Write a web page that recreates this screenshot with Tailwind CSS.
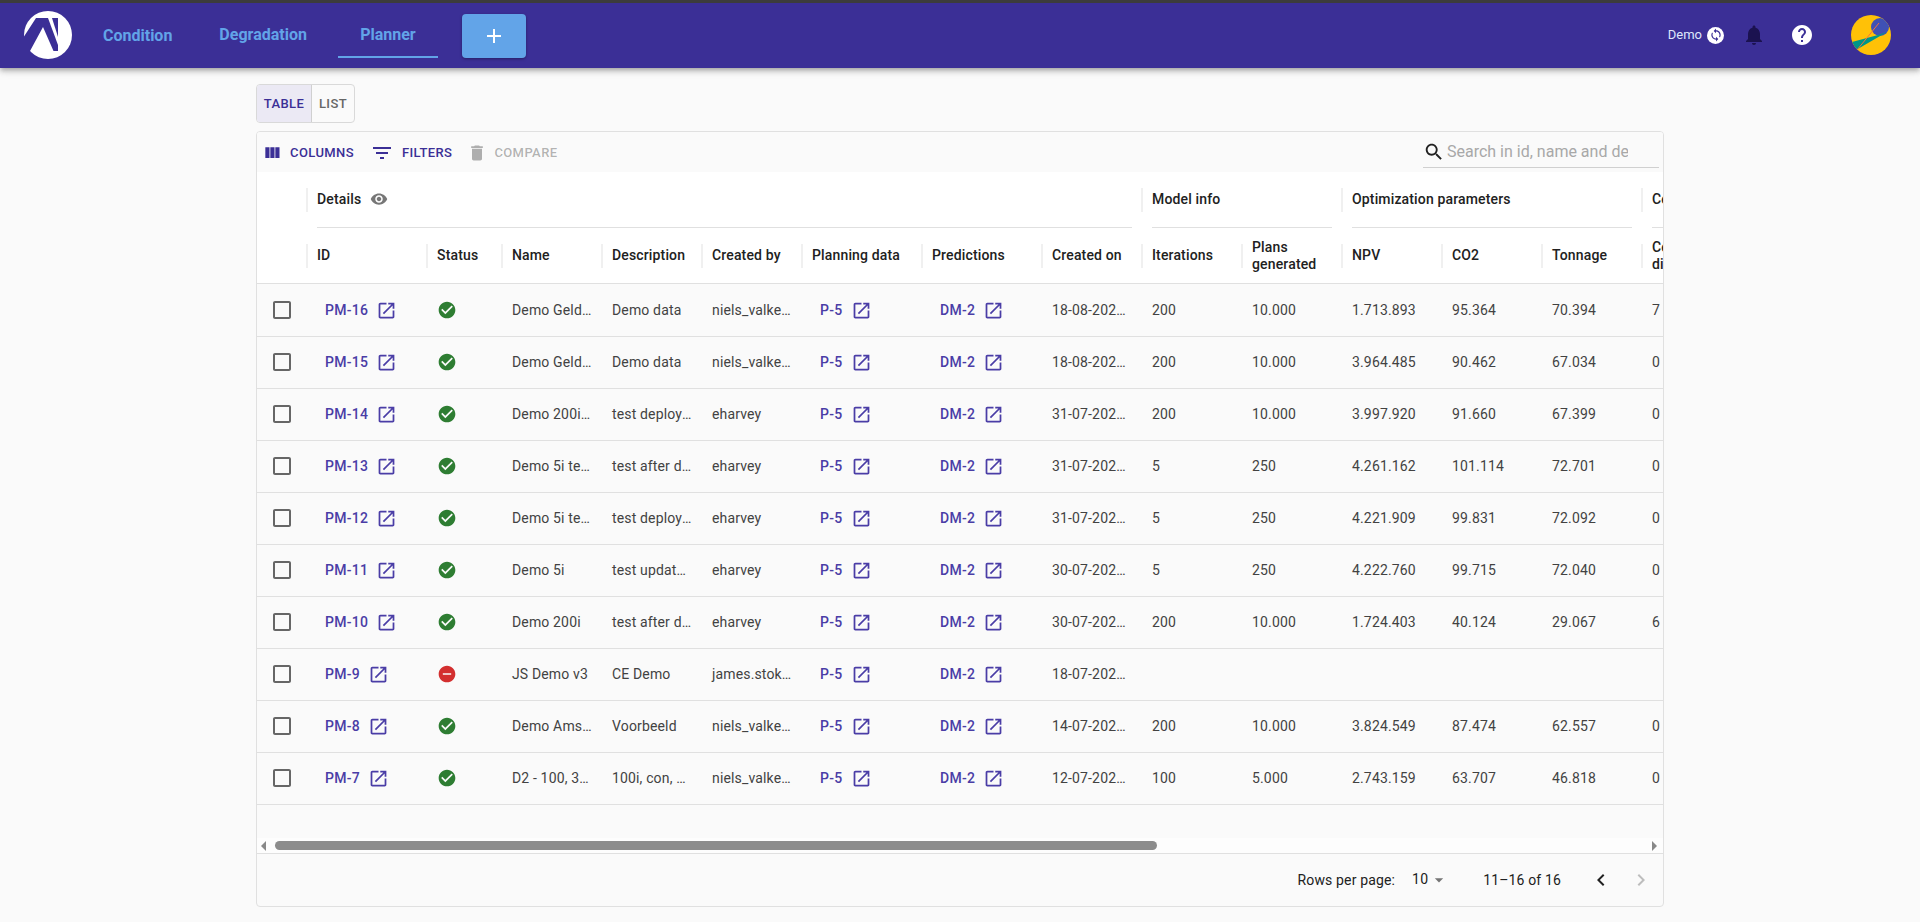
<!DOCTYPE html>
<html lang="en"><head><meta charset="utf-8"><title>Planner</title>
<script src="https://cdn.jsdelivr.net/npm/@tailwindcss/browser@4"></script></head>
<body class="font-['Roboto',sans-serif] bg-[#fafafa] text-[#212121] h-[922px] overflow-hidden">
<svg class="hidden"><defs>
<symbol id="open" viewBox="0 0 24 24"><path fill="currentColor" d="M19 19H5V5h7V3H5c-1.11 0-2 .9-2 2v14c0 1.1.89 2 2 2h14c1.1 0 2-.9 2-2v-7h-2v7zM14 3v2h3.59l-9.83 9.83 1.41 1.41L19 6.41V10h2V3h-7z"/></symbol>
<symbol id="ok" viewBox="0 0 24 24"><path fill="#2e7d32" d="M12 2C6.48 2 2 6.48 2 12s4.48 10 10 10 10-4.48 10-10S17.52 2 12 2zm-2 15-5-5 1.41-1.41L10 14.17l7.59-7.59L19 8l-9 9z"/></symbol>
<symbol id="err" viewBox="0 0 24 24"><path fill="#d32f2f" d="M12 2C6.48 2 2 6.48 2 12s4.48 10 10 10 10-4.48 10-10S17.52 2 12 2zm5 11H7v-2h10v2z"/></symbol>
<symbol id="box" viewBox="0 0 24 24"><path fill="#666" d="M19 5v14H5V5h14m0-2H5c-1.1 0-2 .9-2 2v14c0 1.1.9 2 2 2h14c1.1 0 2-.9 2-2V5c0-1.1-.9-2-2-2z"/></symbol>
</defs></svg>

<header class="border-t-[3px] border-[#3c3c3c] h-[68px] bg-[#3b2f96] flex items-center relative z-10 shadow-[0_2px_4px_-1px_rgba(0,0,0,.2),0_4px_5px_0_rgba(0,0,0,.14),0_1px_10px_0_rgba(0,0,0,.12)]">
  <svg class="ml-6 w-12 h-12 shrink-0 -mt-[2px]" viewBox="0 0 48 48"><circle cx="24" cy="24" r="24" fill="#fff"/><path fill="#3b2f96" d="M-1 27 12 7H34V40H29.5L19 16 6 40H-1Z"/><path fill="#fff" d="M24 7H28L34 26V34Z"/></svg>
  <nav class="ml-2 flex h-full text-[#62a4e8] text-[16px] font-bold">
    <a class="px-[23px] flex items-center pt-[1px] -mt-[1px]">Condition</a>
    <a class="px-[23px] flex items-center -mt-[1px] ml-px">Degradation</a>
    <a class="ml-[8px] w-[100px] justify-center flex items-center -mt-[1px] relative after:content-[''] after:absolute after:left-0 after:right-0 after:bottom-[10px] after:h-[2px] after:bg-[#62a4e8]">Planner</a>
  </nav>
  <button class="ml-6 w-16 h-11 mt-px rounded bg-[#62a4e8] flex items-center justify-center text-white shadow-[0_1px_3px_rgba(0,0,0,.35)]"><svg class="w-6 h-6" viewBox="0 0 24 24"><path fill="currentColor" d="M19 13h-6v6h-2v-6H5v-2h6V5h2v6h6v2z"/></svg></button>
  <div class="ml-auto flex items-center mr-[29px] -mt-[1px]">
    <span class="text-[13px] text-[#dfe6fb]">Demo</span>
    <span class="ml-[5px] w-[17px] h-[17px] rounded-full bg-white flex items-center justify-center"><svg class="w-[14px] h-[14px]" viewBox="0 0 24 24"><path fill="#3b2f96" d="M12 4V1L8 5l4 4V6c3.31 0 6 2.69 6 6 0 1.01-.25 1.97-.7 2.8l1.46 1.46C19.54 15.03 20 13.57 20 12c0-4.42-3.58-8-8-8zm0 14c-3.31 0-6-2.69-6-6 0-1.01.25-1.97.7-2.8L5.24 7.74C4.46 8.97 4 10.43 4 12c0 4.42 3.58 8 8 8v3l4-4-4-4v3z"/></svg></span>
    <svg class="ml-[18px] w-6 h-6" viewBox="0 0 24 24"><path fill="#1b1250" d="M12 22c1.1 0 2-.9 2-2h-4c0 1.1.89 2 2 2zm6-6v-5c0-3.07-1.64-5.64-4.5-6.32V4c0-.83-.67-1.5-1.5-1.5s-1.5.67-1.5 1.5v.68C7.63 5.36 6 7.92 6 11v5l-2 2v1h16v-1l-2-2z"/></svg>
    <svg class="ml-6 w-6 h-6" viewBox="0 0 24 24"><path fill="#fff" d="M12 2C6.48 2 2 6.48 2 12s4.48 10 10 10 10-4.48 10-10S17.52 2 12 2zm1 17h-2v-2h2v2zm2.07-7.75-.9.92C13.45 12.9 13 13.5 13 15h-2v-.5c0-1.1.45-2.1 1.17-2.83l1.24-1.26c.37-.36.59-.86.59-1.41 0-1.1-.9-2-2-2s-2 .9-2 2H8c0-2.21 1.79-4 4-4s4 1.79 4 4c0 .88-.36 1.68-.93 2.25z"/></svg>
    <svg class="ml-[37px] w-10 h-10" viewBox="0 0 40 40"><defs><clipPath id="av"><circle cx="20" cy="20" r="20"/></clipPath></defs><g clip-path="url(#av)"><rect width="40" height="40" fill="#ffc107"/><circle cx="29" cy="12" r="9" fill="#3f51b5"/><path fill="#009688" d="M1 27 5 35 36 17 27 20Z"/><path d="M6 35 28 8" stroke="#f4703e" stroke-width="1"/></g></svg>
  </div>
</header>

<main class="ml-[256px] w-[1408px]">
  <div class="mt-4 flex h-[39px] w-[99px] rounded border border-[#d9d9d9] text-[13px] tracking-[0.4px] font-medium overflow-hidden">
    <button class="w-[55px] bg-[#ebe9f4] text-[#3b2f96] border-r border-[#d0d0d0]">TABLE</button>
    <button class="flex-1 text-[#666]">LIST</button>
  </div>

  <section class="mt-2 h-[776px] border border-[#e0e0e0] rounded overflow-hidden">
    <div class="h-10 pt-[2px] bg-[#fafafa] flex items-center text-[13px] tracking-[0.4px] font-medium text-[#3b2f96]">
      <svg class="ml-[5px] w-5 h-5" viewBox="0 0 24 24"><path fill="currentColor" d="M10 18h5V5h-5v13zm-6 0h5V5H4v13zM16 5v13h5V5h-5z"/></svg>
      <span class="ml-[8px]">COLUMNS</span>
      <svg class="ml-[16px] w-6 h-6" viewBox="0 0 24 24"><path fill="currentColor" d="M10 18h4v-2h-4v2zM3 6v2h18V6H3zm3 7h12v-2H6v2z"/></svg>
      <span class="ml-[8px]">FILTERS</span>
      <svg class="ml-[15px] w-5 h-5 text-black/30" viewBox="0 0 24 24"><path fill="currentColor" d="M6 19c0 1.1.9 2 2 2h8c1.1 0 2-.9 2-2V7H6v12zM19 4h-3.5l-1-1h-5l-1 1H5v2h14V4z"/></svg>
      <span class="ml-[7px] text-black/30">COMPARE</span>
      <label class="ml-auto mr-[4px] w-[236px] h-[35px] -mt-[6px] pt-[5px] border-b border-[#d0d0d0] flex items-center tracking-normal">
        <svg class="w-[22px] h-[22px] text-[#212121] shrink-0" viewBox="0 0 24 24"><path fill="currentColor" d="M15.5 14h-.79l-.28-.27C15.41 12.59 16 11.11 16 9.5 16 5.91 13.09 3 9.5 3S3 5.91 3 9.5 5.91 16 9.5 16c1.61 0 3.09-.59 4.23-1.57l.27.28v.79l5 4.99L20.49 19l-4.99-5zm-6 0C7.01 14 5 11.99 5 9.5S7.01 5 9.5 5 14 7.01 14 9.5 11.99 14 9.5 14z"/></svg>
        <input class="ml-[2px] w-[181px] text-[16px] font-normal outline-none bg-transparent placeholder:text-[#a8a8a8]" placeholder="Search in id, name and description">
      </label>
    </div>

    <div class="h-[666px] overflow-hidden">
      <table class="table-fixed w-[1485px] border-separate border-spacing-0 text-[14px] tracking-[0.15px] [&_th]:relative [&_th]:text-left [&_th]:font-medium [&_th]:before:content-[''] [&_th]:before:absolute [&_th]:before:-left-px [&_th]:before:top-[16px] [&_th]:before:h-6 [&_th]:before:w-[2px] [&_th]:before:bg-[#f0f0f0]">
        <colgroup><col class="w-[50px]"><col class="w-[120px]"><col class="w-[75px]"><col class="w-[100px]"><col class="w-[100px]"><col class="w-[100px]"><col class="w-[120px]"><col class="w-[120px]"><col class="w-[100px]"><col class="w-[100px]"><col class="w-[100px]"><col class="w-[100px]"><col class="w-[100px]"><col class="w-[100px]"><col class="w-[100px]"></colgroup>
        <thead class="bg-white">
          <tr class="h-[56px] [&_div]:mx-[10px] [&_div]:h-[56px] [&_div]:border-b [&_div]:border-[#e0e0e0] [&_div]:flex [&_div]:items-center">
            <td></td>
            <th colspan="8"><div class="gap-[9px] pb-[1px]"><span>Details</span><svg class="w-[18px] h-[18px]" viewBox="0 0 24 24"><path fill="#777" d="M12 4.5C7 4.5 2.73 7.61 1 12c1.73 4.39 6 7.5 11 7.5s9.27-3.11 11-7.5c-1.73-4.39-6-7.5-11-7.5zM12 17c-2.76 0-5-2.24-5-5s2.24-5 5-5 5 2.24 5 5-2.24 5-5 5zm0-8c-1.66 0-3 1.34-3 3s1.34 3 3 3 3-1.34 3-3-1.34-3-3-3z"/></svg></div></th>
            <th colspan="2"><div class="pb-[1px]">Model info</div></th>
            <th colspan="3"><div class="pb-[1px]">Optimization parameters</div></th>
            <th><div class="pb-[1px] whitespace-nowrap">Constraints</div></th>
          </tr>
          <tr class="h-[56px] [&_th]:px-[10px] [&_th]:leading-[17px] [&_th]:border-b [&_th]:border-[#e0e0e0]">
            <td class="border-b border-[#e0e0e0]"></td>
            <th>ID</th><th>Status</th><th>Name</th><th>Description</th><th>Created by</th><th>Planning data</th><th>Predictions</th><th>Created on</th><th>Iterations</th><th>Plans generated</th><th>NPV</th><th>CO2</th><th>Tonnage</th><th>Cost difference</th>
          </tr>
        </thead>
        <tbody class="text-[#424242] [&_tr]:h-[52px] [&_tr:first-child]:!h-[53px] [&_td]:border-b [&_td]:border-[#e0e0e0] [&_td]:px-[10px] [&_td]:truncate [&_td:first-child]:px-[13px] [&_a]:inline-flex [&_a]:items-center [&_a]:gap-[8px] [&_a]:pl-2 [&_a]:font-medium [&_a]:tracking-[0.3px] [&_a]:text-[#4a3da6] [&_a>svg]:w-[21px] [&_a>svg]:h-[21px] [&_a>svg]:shrink-0 [&_td>svg]:block [&_td>svg]:-mt-px [&_td>svg]:w-6 [&_td>svg]:h-6 [&_td:nth-child(3)>svg]:w-5 [&_td:nth-child(3)>svg]:h-5">
          <tr><td><svg><use href="#box"/></svg></td><td><a>PM-16<svg><use href="#open"/></svg></a></td><td><svg><use href="#ok"/></svg></td><td>Demo Gelderland</td><td>Demo data</td><td>niels_valkenburg</td><td><a>P-5<svg><use href="#open"/></svg></a></td><td><a>DM-2<svg><use href="#open"/></svg></a></td><td>18-08-2023 14:12</td><td>200</td><td>10.000</td><td>1.713.893</td><td>95.364</td><td>70.394</td><td>7</td></tr>
          <tr><td><svg><use href="#box"/></svg></td><td><a>PM-15<svg><use href="#open"/></svg></a></td><td><svg><use href="#ok"/></svg></td><td>Demo Gelderland</td><td>Demo data</td><td>niels_valkenburg</td><td><a>P-5<svg><use href="#open"/></svg></a></td><td><a>DM-2<svg><use href="#open"/></svg></a></td><td>18-08-2023 13:40</td><td>200</td><td>10.000</td><td>3.964.485</td><td>90.462</td><td>67.034</td><td>0</td></tr>
          <tr><td><svg><use href="#box"/></svg></td><td><a>PM-14<svg><use href="#open"/></svg></a></td><td><svg><use href="#ok"/></svg></td><td>Demo 200i test</td><td>test deployment</td><td>eharvey</td><td><a>P-5<svg><use href="#open"/></svg></a></td><td><a>DM-2<svg><use href="#open"/></svg></a></td><td>31-07-2023 16:05</td><td>200</td><td>10.000</td><td>3.997.920</td><td>91.660</td><td>67.399</td><td>0</td></tr>
          <tr><td><svg><use href="#box"/></svg></td><td><a>PM-13<svg><use href="#open"/></svg></a></td><td><svg><use href="#ok"/></svg></td><td>Demo 5i test run</td><td>test after deploy</td><td>eharvey</td><td><a>P-5<svg><use href="#open"/></svg></a></td><td><a>DM-2<svg><use href="#open"/></svg></a></td><td>31-07-2023 15:22</td><td>5</td><td>250</td><td>4.261.162</td><td>101.114</td><td>72.701</td><td>0</td></tr>
          <tr><td><svg><use href="#box"/></svg></td><td><a>PM-12<svg><use href="#open"/></svg></a></td><td><svg><use href="#ok"/></svg></td><td>Demo 5i test run</td><td>test deployment</td><td>eharvey</td><td><a>P-5<svg><use href="#open"/></svg></a></td><td><a>DM-2<svg><use href="#open"/></svg></a></td><td>31-07-2023 11:48</td><td>5</td><td>250</td><td>4.221.909</td><td>99.831</td><td>72.092</td><td>0</td></tr>
          <tr><td><svg><use href="#box"/></svg></td><td><a>PM-11<svg><use href="#open"/></svg></a></td><td><svg><use href="#ok"/></svg></td><td>Demo 5i</td><td>test update build</td><td>eharvey</td><td><a>P-5<svg><use href="#open"/></svg></a></td><td><a>DM-2<svg><use href="#open"/></svg></a></td><td>30-07-2023 17:31</td><td>5</td><td>250</td><td>4.222.760</td><td>99.715</td><td>72.040</td><td>0</td></tr>
          <tr><td><svg><use href="#box"/></svg></td><td><a>PM-10<svg><use href="#open"/></svg></a></td><td><svg><use href="#ok"/></svg></td><td>Demo 200i</td><td>test after deploy</td><td>eharvey</td><td><a>P-5<svg><use href="#open"/></svg></a></td><td><a>DM-2<svg><use href="#open"/></svg></a></td><td>30-07-2023 10:16</td><td>200</td><td>10.000</td><td>1.724.403</td><td>40.124</td><td>29.067</td><td>6</td></tr>
          <tr><td><svg><use href="#box"/></svg></td><td><a>PM-9<svg><use href="#open"/></svg></a></td><td><svg><use href="#err"/></svg></td><td>JS Demo v3</td><td>CE Demo</td><td>james.stokes</td><td><a>P-5<svg><use href="#open"/></svg></a></td><td><a>DM-2<svg><use href="#open"/></svg></a></td><td>18-07-2023 09:50</td><td></td><td></td><td></td><td></td><td></td><td></td></tr>
          <tr><td><svg><use href="#box"/></svg></td><td><a>PM-8<svg><use href="#open"/></svg></a></td><td><svg><use href="#ok"/></svg></td><td>Demo Amsterdam</td><td>Voorbeeld</td><td>niels_valkenburg</td><td><a>P-5<svg><use href="#open"/></svg></a></td><td><a>DM-2<svg><use href="#open"/></svg></a></td><td>14-07-2023 12:27</td><td>200</td><td>10.000</td><td>3.824.549</td><td>87.474</td><td>62.557</td><td>0</td></tr>
          <tr><td><svg><use href="#box"/></svg></td><td><a>PM-7<svg><use href="#open"/></svg></a></td><td><svg><use href="#ok"/></svg></td><td>D2 - 100, 300</td><td>100i, con, model</td><td>niels_valkenburg</td><td><a>P-5<svg><use href="#open"/></svg></a></td><td><a>DM-2<svg><use href="#open"/></svg></a></td><td>12-07-2023 15:03</td><td>100</td><td>5.000</td><td>2.743.159</td><td>63.707</td><td>46.818</td><td>0</td></tr>
        </tbody>
      </table>
    </div>

    <div class="h-[16px] border-b border-[#e0e0e0] bg-[#fdfdfd] flex items-center">
      <svg class="ml-[3px] w-2 h-[10px]" viewBox="0 0 8 10"><path fill="#888" d="M6 0V10L1 5Z"/></svg>
      <div class="ml-[7px] w-[882px] h-[9px] rounded-[5px] bg-[#8c8c8c]"></div>
      <svg class="ml-auto mr-[5px] w-2 h-[10px]" viewBox="0 0 8 10"><path fill="#888" d="M2 0V10L7 5Z"/></svg>
    </div>

    <footer class="h-[52px] flex items-center justify-end text-[14px] tracking-[0.15px] text-[#212121]">
      <span>Rows per page:</span>
      <span class="ml-[17px] -mt-[2px]">10</span>
      <svg class="ml-[1px] w-5 h-5 text-[#757575]" viewBox="0 0 24 24"><path fill="currentColor" d="M7 10l5 5 5-5z"/></svg>
      <span class="ml-[34px]">11–16 of 16</span>
      <svg class="ml-[28px] w-6 h-6" viewBox="0 0 24 24"><path fill="#212121" d="M15.41 7.41 14 6l-6 6 6 6 1.41-1.41L10.83 12z"/></svg>
      <svg class="ml-[16px] mr-[10px] w-6 h-6" viewBox="0 0 24 24"><path fill="#bdbdbd" d="M10 6 8.59 7.41 13.17 12l-4.58 4.59L10 18l6-6z"/></svg>
    </footer>
  </section>
</main>
</body></html>
